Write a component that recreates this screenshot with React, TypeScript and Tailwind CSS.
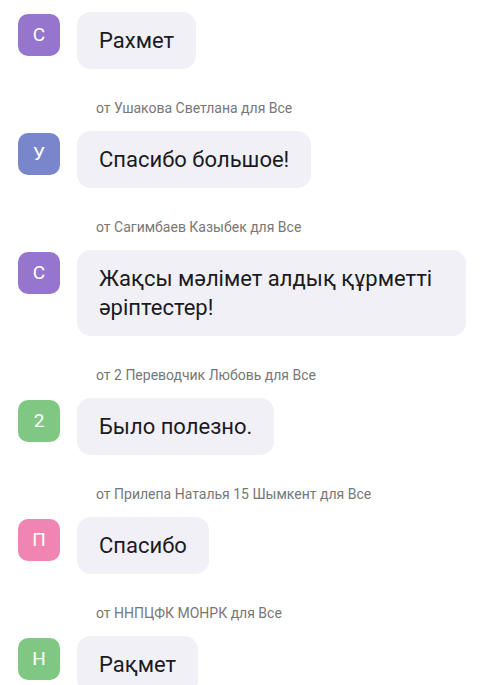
const messages = [
  { from: "", letter: "С", color: "bg-[#9575cd]", text: "Рахмет" },
  { from: "от Ушакова Светлана для Все", letter: "У", color: "bg-[#7986cb]", text: "Спасибо большое!" },
  { from: "от Сагимбаев Казыбек для Все", letter: "С", color: "bg-[#9575cd]", text: "Жақсы мәлімет алдық құрметті әріптестер!" },
  { from: "от 2 Переводчик Любовь для Все", letter: "2", color: "bg-[#81c784]", text: "Было полезно." },
  { from: "от Прилепа Наталья 15 Шымкент для Все", letter: "П", color: "bg-[#ef86b1]", text: "Спасибо" },
  { from: "от ННПЦФК МОНРК для Все", letter: "Н", color: "bg-[#81c784]", text: "Рақмет" },
];

export default function App() {
  return (
    <div className="w-[500px] h-[685px] overflow-hidden bg-white font-['Roboto',sans-serif] pt-3">
      {messages.map((m, i) => (
        <div key={i}>
          {m.from && (
            <div className="pl-[96px] text-[14px] leading-4 text-[#777777] mt-[31px] mb-[15px]">{m.from}</div>
          )}
          <div className="flex items-start gap-[17px] pl-[18px]">
            <div className={`w-[42px] h-[42px] mt-[2px] shrink-0 rounded-[10px] ${m.color} flex items-center justify-center text-white text-[19px]`}>
              {m.letter}
            </div>
            <div className="bg-[#f1f0f7] rounded-[14px] px-[22px] py-[14px] max-w-[389px] text-[22px] leading-[29px] text-[#1b1b1f]">
              {m.text}
            </div>
          </div>
        </div>
      ))}
    </div>
  );
}
